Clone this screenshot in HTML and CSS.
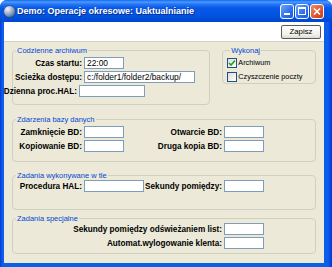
FILE: index.html
```html
<!DOCTYPE html>
<html lang="pl">
<head>
  <meta charset="UTF-8">
  <title>Demo: Operacje okresowe: Uaktualnianie</title>
  <link rel="stylesheet" href="styles.css">
</head>
<body>
  <div class="window">
    <div class="titlebar">
      <svg class="app-icon" width="13" height="13" viewBox="0 0 13 13">
        <defs>
          <radialGradient id="globe" cx="0.35" cy="0.3" r="0.8">
            <stop offset="0" stop-color="#f2f6ff"/>
            <stop offset="0.45" stop-color="#9fb4d8"/>
            <stop offset="1" stop-color="#3d5a92"/>
          </radialGradient>
        </defs>
        <circle cx="6.5" cy="6.5" r="6" fill="url(#globe)" stroke="#2a4478" stroke-width="0.8"/>
      </svg>
      <span class="title">Demo: Operacje okresowe: Uaktualnianie</span>
      <div class="title-buttons">
        <span class="tbtn">
          <svg width="12" height="13" viewBox="0 0 12 13"><rect x="3" y="8" width="6" height="2" fill="#fff"/></svg>
        </span>
        <span class="tbtn">
          <svg width="12" height="13" viewBox="0 0 12 13"><rect x="2.5" y="2.5" width="7" height="7" fill="none" stroke="#fff"/><rect x="2" y="2" width="8" height="2" fill="#fff"/></svg>
        </span>
        <span class="tbtn close">
          <svg width="12" height="13" viewBox="0 0 12 13"><path d="M3 3.5L9 9.5M9 3.5L3 9.5" stroke="#fff" stroke-width="1.6"/></svg>
        </span>
      </div>
    </div>

    <div class="client">
      <div class="toolbar">
        <button class="btn">Zapisz</button>
      </div>

      <div class="panel">
        <div class="top-row">
          <fieldset class="group g-daily">
            <legend>Codzienne archiwum</legend>
            <div class="row">
              <span class="lbl w71">Czas startu:</span>
              <span class="field w40">22:00</span>
            </div>
            <div class="row">
              <span class="lbl w71">Scieżka dostępu:</span>
              <span class="field w111">c:/folder1/folder2/backup/</span>
            </div>
            <div class="row">
              <span class="lbl w66">Dzienna proc.HAL:</span>
              <span class="field w66"></span>
            </div>
          </fieldset>

          <fieldset class="group g-run">
            <legend>Wykonaj</legend>
            <div class="check-row">
              <span class="check">
                <svg width="8" height="8" viewBox="0 0 8 8"><path d="M1 4L3 6L7 1.5" fill="none" stroke="#21a121" stroke-width="1.6"/></svg>
              </span>
              <span>Archiwum</span>
            </div>
            <div class="check-row">
              <span class="check"></span>
              <span>Czyszczenie poczty</span>
            </div>
          </fieldset>
        </div>

        <fieldset class="group g-db">
          <legend>Zdarzenia bazy danych</legend>
          <div class="row">
            <span class="lbl w71">Zamknięcie BD:</span>
            <span class="field w40"></span>
            <span class="lbl w100">Otwarcie BD:</span>
            <span class="field w40"></span>
          </div>
          <div class="row">
            <span class="lbl w71">Kopiowanie BD:</span>
            <span class="field w40"></span>
            <span class="lbl w100">Druga kopia BD:</span>
            <span class="field w40"></span>
          </div>
        </fieldset>

        <fieldset class="group g-bg">
          <legend>Zadania wykonywane w tle</legend>
          <div class="row">
            <span class="lbl w71">Procedura HAL:</span>
            <span class="field w60"></span>
            <span class="lbl w80">Sekundy pomiędzy:</span>
            <span class="field w40"></span>
          </div>
        </fieldset>

        <fieldset class="group g-special">
          <legend>Zadania specjalne</legend>
          <div class="row">
            <span class="lbl w211">Sekundy pomiędzy odświeżaniem list:</span>
            <span class="field w40"></span>
          </div>
          <div class="row">
            <span class="lbl w211">Automat.wylogowanie klenta:</span>
            <span class="field w40"></span>
          </div>
        </fieldset>
      </div>
    </div>
  </div>
</body>
</html>
```

FILE: styles.css
```css
* { box-sizing: border-box; }
body { margin: 0; font-family: "Liberation Sans", Arial, sans-serif; background: #fff; }

.window {
  width: 332px;
  height: 267px;
  background: linear-gradient(90deg, #0831d9 0, #0a5fe8 2px, #0a5fe8 328px, #0831d9 332px);
  border-radius: 7px 7px 0 0;
  display: flex;
  flex-direction: column;
  overflow: hidden;
}

/* title bar */
.titlebar {
  height: 22px;
  flex: none;
  display: flex;
  align-items: center;
  padding: 0 8px 0 3px;
  color: #fff;
  background: linear-gradient(#1467f0 0, #4a9bff 2px, #2a78f5 4px, #0858e8 8px, #0053e0 16px, #0048cc 22px);
}
.app-icon { flex: none; margin-right: 1px; }
.title {
  flex: 1;
  font-size: 9px;
  font-weight: bold;
  text-shadow: 1px 1px #0a2a8a;
  white-space: nowrap;
}
.title-buttons { display: flex; gap: 1px; }
.tbtn {
  width: 14px;
  height: 15px;
  border: 1px solid #fff;
  border-radius: 3px;
  background: linear-gradient(135deg, #6fa6ff, #2e6ef0 60%, #1e58d8);
  display: flex;
}
.tbtn.close { background: linear-gradient(135deg, #f08a6a, #e05530 60%, #c43a18); }

/* client area */
.client {
  flex: 1;
  margin: 0 8px 4px 4px;
  background: #ece9d8;
  display: flex;
  flex-direction: column;
}
.toolbar {
  height: 20px;
  flex: none;
  background: #fff;
  border-bottom: 1px solid #d4d0c0;
  display: flex;
  justify-content: flex-end;
  align-items: center;
  padding-right: 3px;
}
.btn {
  width: 40px;
  height: 14px;
  padding: 0;
  font-family: inherit;
  font-size: 7.8px;
  color: #000;
  border: 1px solid #5a5a5a;
  border-radius: 2px;
  background: linear-gradient(#fff, #f2f1ea 70%, #dcdad0);
}

.panel { padding: 4px 8px 0 8px; }
.top-row { display: flex; gap: 12px; align-items: flex-start; }

.group {
  margin: 0;
  padding: 2px 0 0;
  min-width: 0;
  border: 1px solid #d0d0bf;
  border-radius: 4px;
}
.group legend {
  color: #0046d5;
  font-size: 7.5px;
  line-height: 9px;
  padding: 0 1px;
  margin-left: 3px;
}
.g-daily { width: 199px; padding-bottom: 7px; }
.g-run { width: 94px; padding: 1px 0 0 4px; }
.g-db { margin-top: 10px; padding-bottom: 9px; }
.g-bg { margin-top: 9px; padding-top: 0; padding-bottom: 17px; }
.g-special { margin-top: 4px; padding-top: 0; padding-bottom: 4px; }

.row {
  display: flex;
  align-items: center;
  height: 12px;
  margin-bottom: 2px;
}
.row:last-child { margin-bottom: 0; }

.lbl {
  display: flex;
  justify-content: flex-end;
  padding-right: 2px;
  font-size: 8.2px;
  font-weight: bold;
  white-space: nowrap;
  flex: none;
}
.field {
  height: 12px;
  flex: none;
  background: #fff;
  border: 1px solid #7f9db9;
  padding: 0 2px;
  font-size: 8.4px;
  line-height: 10px;
  white-space: nowrap;
  overflow: hidden;
}

.w40 { width: 40px; }
.w60 { width: 60px; }
.w66 { width: 66px; }
.w71 { width: 71px; }
.w80 { width: 80px; }
.w100 { width: 100px; }
.w111 { width: 111px; }
.w211 { width: 211px; }

.check-row {
  display: flex;
  align-items: center;
  height: 13px;
  gap: 1px;
  font-size: 7.3px;
}
.check-row + .check-row { margin-top: 1px; }
.check {
  width: 10px;
  height: 10px;
  border: 1px solid #1c5180;
  background: linear-gradient(135deg, #dcdcd7, #fff);
  display: flex;
  align-items: center;
  justify-content: center;
}
```
